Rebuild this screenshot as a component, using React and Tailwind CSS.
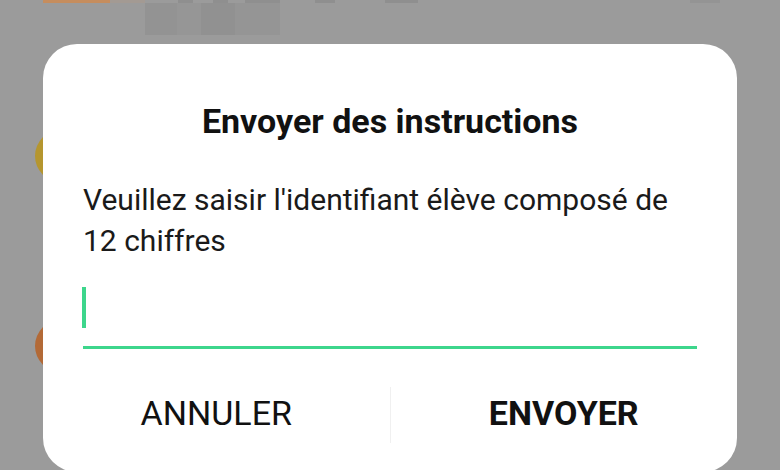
import React from 'react';

const green = 'bg-[#3dd68c]';

const Backdrop = () => (
  <div className="h-[470px] w-full bg-[#9b9b9b] overflow-hidden">
    {/* blurred strip of the screen behind the dialog */}
    <div className="flex h-[3px]">
      <div className="ml-[43px] w-[67px] bg-[#c58d5e]" />
      <div className="w-[35px] bg-[#a39a93]" />
      <div className="ml-[33px] w-[15px] bg-[#8f8f8f]" />
      <div className="ml-[20px] w-[15px] bg-[#8f8f8f]" />
      <div className="ml-[17px] w-[35px] bg-[#8f8f8f]" />
      <div className="ml-[35px] w-[20px] bg-[#8f8f8f]" />
      <div className="ml-[50px] w-[33px] bg-[#8f8f8f]" />
      <div className="ml-[272px] w-[30px] bg-[#949494]" />
    </div>
    <div className="flex">
      <div className="ml-[145px] h-[32px] w-[135px] flex">
        <div className="w-[32px] bg-[#939393]" />
        <div className="w-[24px] bg-[#969696]" />
        <div className="w-[34px] bg-[#919191]" />
        <div className="w-[45px] bg-[#959595]" />
      </div>
    </div>
    <div className="ml-[35px] mt-[95px] h-[52px] w-[52px] rounded-full bg-[#b5962f]" />
    <div className="ml-[35px] mt-[138px] h-[52px] w-[52px] rounded-full bg-[#b36a37]" />
  </div>
);

export default function App() {
  return (
    <div className="relative h-[470px] w-[780px] overflow-hidden font-['Roboto',sans-serif]">
      <Backdrop />
      <div className="absolute left-[43px] top-[44px] flex h-[428px] w-[694px] flex-col rounded-[34px] bg-white">
        <h1 className="pt-[57px] text-center text-[34px] font-bold leading-[40px] text-[#111]">
          Envoyer des instructions
        </h1>
        <p className="mt-[38px] px-[40px] text-[30px] leading-[41px] text-[#1a1a1a]">
          Veuillez saisir l'identifiant élève composé de 12 chiffres
        </p>
        <div className="mx-[40px] mt-[26px] h-[62px] border-b-[3px] border-[#3dd68c]">
          <div className={`ml-[-1px] h-[41px] w-[4px] ${green}`} />
        </div>
        <div className="mt-[38px] flex h-[56px]">
          <button className="flex flex-1 items-center justify-center pb-[5px] text-[34px] leading-none text-[#111]">
            ANNULER
          </button>
          <div className="w-px bg-[#f0f0f0]" />
          <button className="flex flex-1 items-center justify-center pb-[5px] text-[34px] font-bold leading-none text-[#111]">
            ENVOYER
          </button>
        </div>
      </div>
    </div>
  );
}
